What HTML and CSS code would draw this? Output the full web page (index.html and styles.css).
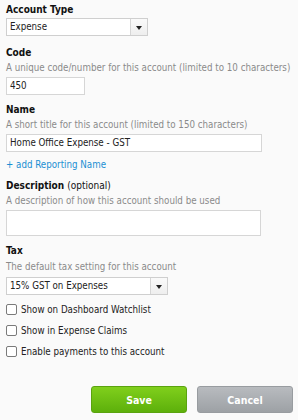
FILE: index.html
```html
<!DOCTYPE html>
<html>
<head>
    <title>Add Account</title>
    <link rel="stylesheet" href="styles.css">
</head>
<body>
    <form class="account-form">
        <div class="form-group first">
            <label class="field-label">Account Type</label>
            <div class="select-box type-select">
                <span class="select-value">Expense</span>
                <span class="select-arrow"></span>
            </div>
        </div>

        <div class="form-group">
            <label class="field-label">Code</label>
            <div class="hint">A unique code/number for this account (limited to 10 characters)</div>
            <div class="text-input code-input">450</div>
        </div>

        <div class="form-group">
            <label class="field-label">Name</label>
            <div class="hint">A short title for this account (limited to 150 characters)</div>
            <div class="text-input name-input">Home Office Expense - GST</div>
            <a class="add-link">+ add Reporting Name</a>
        </div>

        <div class="form-group desc-group">
            <label class="field-label">Description <span class="optional">(optional)</span></label>
            <div class="hint">A description of how this account should be used</div>
            <div class="text-area"></div>
        </div>

        <div class="form-group tax-group">
            <label class="field-label">Tax</label>
            <div class="hint">The default tax setting for this account</div>
            <div class="select-box tax-select">
                <span class="select-value">15% GST on Expenses</span>
                <span class="select-arrow"></span>
            </div>
        </div>

        <div class="checks">
            <label class="check"><span class="box"></span>Show on Dashboard Watchlist</label>
            <label class="check"><span class="box"></span>Show in Expense Claims</label>
            <label class="check"><span class="box"></span>Enable payments to this account</label>
        </div>

        <div class="actions">
            <button type="button" class="btn save">Save</button>
            <button type="button" class="btn cancel">Cancel</button>
        </div>
    </form>
</body>
</html>
```
FILE: styles.css
```css
body {
    margin: 0;
    padding: 3px 5px 0 6px;
    background: #fafafa;
    font-family: "DejaVu Sans Condensed", "DejaVu Sans", sans-serif;
    font-size: 9.7px;
    color: #222;
}
.form-group {
    margin-bottom: 8px;
}
.form-group.first {
    margin-bottom: 10px;
}
.field-label {
    display: block;
    font-weight: bold;
    font-size: 10px;
    line-height: 14px;
    color: #111;
    margin-bottom: 1px;
}
.optional {
    font-weight: normal;
}
.hint {
    color: #8a8a8a;
    line-height: 13px;
    margin-bottom: 3px;
    white-space: nowrap;
}
.tax-group .field-label {
    margin-bottom: 2px;
}
.tax-group .hint {
    margin-bottom: 4px;
}
.text-input, .select-box, .text-area {
    box-sizing: border-box;
    height: 18px;
    background: white;
    border: 1px solid #d6d6d6;
    line-height: 16px;
    padding-left: 3px;
    color: #222;
}
.code-input {
    width: 79px;
}
.name-input {
    width: 256px;
}
.text-area {
    width: 255px;
    height: 26px;
}
.add-link {
    display: block;
    margin-top: 6px;
    line-height: 13px;
    color: #1a8fd2;
}
.select-box {
    display: flex;
    justify-content: space-between;
    padding-right: 0;
    border-color: #cfcfcf;
}
.type-select {
    width: 142px;
}
.tax-select {
    width: 162px;
}
.select-arrow {
    width: 16px;
    border-left: 1px solid #d6d6d6;
    background: linear-gradient(#fafafa, #eeeeee);
    position: relative;
}
.select-arrow::after {
    content: "";
    position: absolute;
    left: 5px;
    top: 7px;
    border-left: 3px solid transparent;
    border-right: 3px solid transparent;
    border-top: 4px solid #222;
}
.checks {
    display: flex;
    flex-direction: column;
    gap: 8px;
    margin-top: 7px;
}
.check {
    display: flex;
    align-items: center;
    gap: 4px;
    line-height: 13px;
}
.box {
    width: 11px;
    height: 11px;
    box-sizing: border-box;
    border: 1px solid #7a7a7a;
    border-radius: 2px;
    background: white;
}
.actions {
    display: flex;
    justify-content: flex-end;
    gap: 10px;
    margin-top: 28px;
}
.btn {
    width: 96px;
    height: 27px;
    border-radius: 3px;
    font-family: "DejaVu Sans Condensed", "DejaVu Sans", sans-serif;
    font-weight: bold;
    font-size: 10.5px;
    color: white;
}
.save {
    background: linear-gradient(#80cf1c, #5db00b);
    border: 1px solid #5aa30f;
}
.cancel {
    background: linear-gradient(#b8bbbf, #9da1a5);
    border: 1px solid #989ca0;
}
```
